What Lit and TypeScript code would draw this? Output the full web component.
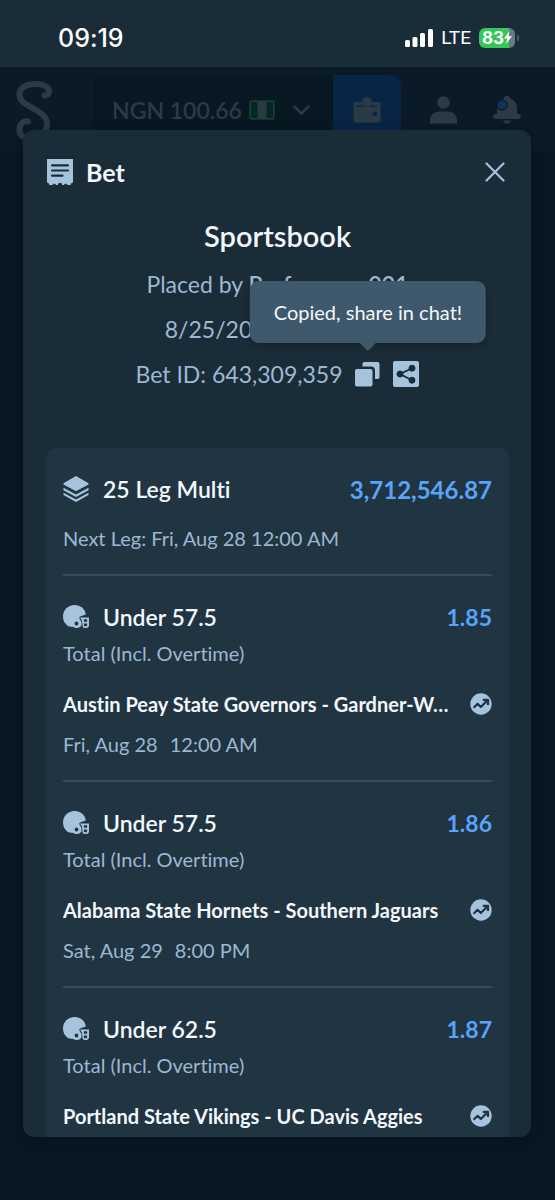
import { LitElement, html, css, svg } from "lit";
import { customElement, property, state } from "lit/decorators.js";

interface Leg {
  pick: string;
  odds: string;
  market: string;
  fixture: string;
  date: string;
  time: string;
}

const LEGS: Leg[] = [
  { pick: "Under 57.5", odds: "1.85", market: "Total (Incl. Overtime)", fixture: "Austin Peay State Governors - Gardner-Webb Runnin' Bulldogs", date: "Fri, Aug 28", time: "12:00 AM" },
  { pick: "Under 57.5", odds: "1.86", market: "Total (Incl. Overtime)", fixture: "Alabama State Hornets - Southern Jaguars", date: "Sat, Aug 29", time: "8:00 PM" },
  { pick: "Under 62.5", odds: "1.87", market: "Total (Incl. Overtime)", fixture: "Portland State Vikings - UC Davis Aggies", date: "Sat, Aug 29", time: "8:00 PM" },
];

const icon = (w: number, h: number, body: unknown) =>
  html`<svg width=${w} height=${h} viewBox="0 0 ${w} ${h}" fill="currentColor" aria-hidden="true">${body}</svg>`;

const slipIcon = () => icon(26, 26, svg`
  <path fill-rule="evenodd" d="M0 0h26v23.500c-1.400.2-2.200 1-2.400 2.500h-3.200c-.3-.9-.9-1.300-1.700-1.300s-1.300.4-1.700 1.300h-1.800c-.2-1.500-1-2.300-2.200-2.300s-2 .8-2.200 2.300H9c-.4-.9-1-1.300-1.700-1.300-.8 0-1.400.4-1.700 1.300H2.400C2.200 24.500 1.400 23.700 0 23.500zM5 5.200a1.100 1.100 0 0 0 0 2.200h16a1.100 1.100 0 0 0 0-2.200zm0 5.200a1.100 1.100 0 0 0 0 2.200h16a1.100 1.100 0 0 0 0-2.200zm0 5.200a1.100 1.100 0 0 0 0 2.200h10.500a1.100 1.100 0 0 0 0-2.200z"/>`);
const closeIcon = () => icon(20, 20, svg`<path d="M1.500 1.500l17 17M18.500 1.500l-17 17" fill="none" stroke="currentColor" stroke-width="2.200" stroke-linecap="round"/>`);
const copyIcon = () => icon(25, 25, svg`
  <path d="M9.500 0h13A2 2 0 0 1 24.500 2v13a2 2 0 0 1-2 2H20V8.500A4 4 0 0 0 16 4.500H7.500V2a2 2 0 0 1 2-2z"/>
  <rect x="0" y="7" width="17.500" height="17.500" rx="2"/>`);
const shareIcon = () => icon(26, 26, svg`
  <rect width="26" height="26" rx="2"/>
  <g fill="#1a2c38" stroke="#1a2c38"><path d="M19 7.200L7 13l12 6.200" fill="none" stroke-width="1.800"/>
  <circle cx="19" cy="7.200" r="3" /><circle cx="7" cy="13" r="3"/><circle cx="19" cy="19.200" r="3"/></g>`);
const layersIcon = () => icon(26, 26, svg`
  <path d="M13 0l12.500 7.200v1.400L13 15.300.500 8.600V7.200z"/>
  <path d="M.500 11.700L13 18.500l12.500-6.800v2.500L13 21 .500 14.200z"/>
  <path d="M.500 16.800L13 23.500l12.500-6.700v2.300L13 26 .500 19.100z"/>`);
const helmetIcon = () => icon(26, 24, svg`
  <path fill-rule="evenodd" d="M11.500 0C18 0 22.300 4.300 22.800 9.600l-5.200 1.600c-1.200.4-1.600 1.400-1 2.500l1.900 3.300v3.500c-1.200 1.700-2.800 2.500-4.700 2.500-1.800 0-3-.9-4.700-1.300-1.500-.3-3.300.2-4.600-1C1.500 18.500 0 15.600 0 11.600 0 5 5 0 11.500 0zM13.500 16.600a1.900 1.900 0 1 0 0 3.800 1.900 1.900 0 0 0 0-3.800z"/>
  <path fill-rule="evenodd" d="M17 12.400h9v8.800l-1.800 1.800h-3.400l-1.200-1.500L19 15.500zM20.900 14.200v2.600h3.200v-2.600zm0 4.300v2.300l.6.500h1.900l.7-.7v-2.100z"/>`);
const trendIcon = () => icon(22, 22, svg`
  <circle cx="11" cy="11" r="10.700"/>
  <path d="M3.600 14.800l4-4 3.200 3.200 6.600-6.600M12.800 6.800h5.200v5.200" fill="none" stroke="#213441" stroke-width="2.200" stroke-linejoin="round"/>`);

@customElement("status-bar")
export class StatusBar extends LitElement {
  static styles = css`
    :host { display: flex; align-items: center; justify-content: space-between; height: 67px; padding: 8px 40px 0 58px; box-sizing: border-box; background: #1a2c38; color: #fff; font-family: Inter, sans-serif; }
    .time { font-size: 25px; font-weight: 500; }
    .right { display: flex; align-items: center; gap: 8px; }
    .net { font-size: 19px; font-family: Roboto, sans-serif; }
    .battery { position: relative; display: flex; align-items: center; height: 20px; padding: 0 3px; border-radius: 6px; background: linear-gradient(90deg, #34c759 83%, #6a7a80 83%); font-size: 17px; font-weight: 700; }
    .battery::after { content: ""; position: absolute; right: -4px; top: 7px; width: 2px; height: 6px; border-radius: 1px; background: #4c5c66; }
    svg { display: block; }
  `;
  render() {
    return html`
      <span class="time">09:19</span>
      <div class="right">
        ${icon(28, 18, svg`<rect y="11" width="5" height="7" rx="1.500"/><rect x="7.500" y="8" width="5" height="10" rx="1.500"/><rect x="15" y="4" width="5" height="14" rx="1.500"/><rect x="23" width="5" height="18" rx="1.500"/>`)}
        <span class="net">LTE</span>
        <span class="battery">83${icon(8, 13, svg`<path d="M5.500 0L0 7.500h3.200L2 13l6-7.800H4.600z"/>`)}</span>
      </div>`;
  }
}

@customElement("site-header")
export class SiteHeader extends LitElement {
  static styles = css`
    :host { display: grid; grid-template-columns: 78px minmax(0, 1fr) 154px; height: 85px; padding: 8px 0 0 16px; box-sizing: border-box; background: #0a1a26; color: #2c3a45; font-family: Lato, sans-serif; }
    svg { display: block; }
    button { border: 0; padding: 0; background: none; color: inherit; font: inherit; }
    .logo { color: #2c3a45; padding-top: 6px; }
    .balance { display: flex; height: 70px; border-radius: 10px; overflow: hidden; background: #081822; }
    .amount { flex: 1; display: flex; align-items: center; gap: 7px; padding: 0 23px 0 18px; font-size: 23px; font-weight: 600; white-space: nowrap; }
    .chevron { margin-left: auto; }
    .wallet { display: grid; place-items: center; width: 68px; background: #072544; }
    .actions { display: flex; align-items: center; gap: 36px; height: 70px; padding-left: 29px; }
  `;
  render() {
    return html`
      <a class="logo" href="#" aria-label="Home">${icon(38, 60, svg`<path d="M28.500 14.500c4-.5 5.500-3.500 4-6.500C30 3.500 25 3 19.500 3 9 3 3.500 7.500 3.500 13.500c0 8 9 11 15.500 15 7 4 12 7.500 12 14.500S26 56 18 57M12 40.500C6 39.500 3 44.500 3.500 50c.3 3 1.500 4.500 3.500 5.500" fill="none" stroke="currentColor" stroke-width="6" stroke-linecap="round"/>`)}</a>
      <div class="balance">
        <button class="amount">NGN 100.66
          ${icon(26, 20, svg`<rect x="1" y="1" width="24" height="18" rx="2" fill="#2c3a45" stroke="#183d35" stroke-width="1.500"/><path d="M2 2h6.500v16H2zM17.500 2H24v16h-6.500z" fill="#03291f"/>`)}
          <span class="chevron">${icon(17, 10, svg`<path d="M1.500 1.500l7 7 7-7" fill="none" stroke="currentColor" stroke-width="2.500" stroke-linecap="round"/>`)}</span>
        </button>
        <button class="wallet" aria-label="Wallet">${icon(28, 26, svg`<path fill-rule="evenodd" d="M2 5h7v3.500H3.500v1.200H24.500V8.500H19V5h7a1.500 1.500 0 0 1 1.500 1.500V23a2.500 2.500 0 0 1-2.500 2.500H3A2.500 2.500 0 0 1 .500 23V6.500A1.500 1.500 0 0 1 2 5zM22 14.500a2.300 2.300 0 1 0 0 4.600 2.300 2.300 0 0 0 0-4.600z"/><circle cx="14" cy="5" r="5"/>`)}</button>
      </div>
      <div class="actions">
        <button aria-label="Profile">${icon(27, 28, svg`<circle cx="13.500" cy="6.500" r="6.300"/><path d="M0 27.500v-3c0-5 4-9 9-9h9c5 0 9 4 9 9v3z"/>`)}</button>
        <button aria-label="Notifications">${icon(28, 28, svg`<path d="M11 2.500a3 3 0 0 1 6 0c4.500 1.300 7 5 7 9.500V18h1.500a2.400 2.400 0 0 1 0 5h-23a2.400 2.400 0 0 1 0-5H4v-6C4 7.500 6.500 3.800 11 2.500zM10 24.500h8c-.5 2-2 3.200-4 3.200s-3.500-1.200-4-3.200z"/><circle cx="9" cy="9" r="5.800" fill="#0a1a26"/><circle cx="9" cy="9" r="4.500" fill="#12335c"/>`)}</button>
      </div>`;
  }
}

@customElement("bet-leg")
export class BetLeg extends LitElement {
  @property({ attribute: false }) leg!: Leg;
  static styles = css`
    :host { display: block; border-top: 2px solid #374b59; padding: 23px 0 18px; line-height: 36px; }
    svg { display: block; }
    .row { display: flex; align-items: center; height: 36px; }
    .pick { margin-left: 14px; flex: 1; color: #f2f8fd; font-size: 23px; font-weight: 600; }
    .glyph { color: #a6c3de; }
    .odds { color: #57a4fa; font-size: 23px; font-weight: 700; }
    .market { font-size: 20px; height: 36px; margin-bottom: 15px; }
    .fixture { flex: 1; min-width: 0; overflow: hidden; text-overflow: ellipsis; white-space: nowrap; color: #f2f8fd; text-decoration: none; font-size: 20px; font-weight: 700; margin-right: 20px; }
    .when { display: flex; gap: 12px; font-size: 20px; height: 36px; margin-top: 4px; }
    button { border: 0; padding: 0; background: none; color: #a6c3de; }
  `;
  render() {
    const l = this.leg;
    return html`
      <div class="row"><span class="glyph">${helmetIcon()}</span><span class="pick">${l.pick}</span><span class="odds">${l.odds}</span></div>
      <div class="market">${l.market}</div>
      <div class="row"><a class="fixture" href="#">${l.fixture}</a><button aria-label="Live stats">${trendIcon()}</button></div>
      <div class="when"><span>${l.date}</span><span>${l.time}</span></div>`;
  }
}

@customElement("app-root")
export class AppRoot extends LitElement {
  @state() private copied = true;
  static styles = css`
    :host { display: block; position: relative; height: 100vh; overflow: hidden; background: #071824; font-family: Lato, sans-serif; font-variant-ligatures: none; color: #9db8d2; }
    svg { display: block; }
    button { border: 0; padding: 0; background: none; color: #a6c3de; font: inherit; cursor: pointer; }
    .overlay { position: absolute; inset: 0; display: flex; padding: 130px 24px 63px 23px; }
    .modal { flex: 1; min-width: 0; display: flex; flex-direction: column; overflow: hidden; border-radius: 11px; background: #1a2c38; box-shadow: 0 4px 14px rgba(0, 8, 16, 0.3); }
    .head { display: flex; align-items: center; gap: 13px; height: 84px; flex: none; padding: 0 26px 0 24px; color: #a6c3de; }
    .head h1 { flex: 1; margin: 0; color: #f2f8fd; font-size: 25px; font-weight: 700; }
    .body { flex: 1; min-height: 0; overflow-y: auto; scrollbar-width: none; padding: 4px 22px 0 23px; }
    .summary { display: flex; flex-direction: column; align-items: center; gap: 9px; line-height: 36px; font-size: 23px; }
    .summary h2 { margin: 0 0 3px; color: #f2f8fd; font-size: 29px; font-weight: 600; }
    .summary p { margin: 0; }
    .summary strong { font-weight: 600; }
    .id { display: flex; align-items: center; gap: 13px; }
    .copy { position: relative; }
    .tip { position: absolute; left: 50%; bottom: 44px; transform: translateX(-50%); padding: 13px 24px; border-radius: 9px; background: #3f586b; color: #f2f8fd; font-size: 20px; line-height: 36px; white-space: nowrap; box-shadow: 0 3px 6px rgba(0, 0, 0, 0.2); }
    .tip::after { content: ""; position: absolute; left: 50%; top: 100%; margin-left: -8px; border: 8px solid transparent; border-top-color: #3f586b; border-bottom: 0; }
    .card { margin-top: 56px; padding: 23px 17px 0; border-radius: 10px; background: #213441; }
    .multi { display: flex; align-items: center; gap: 14px; height: 36px; font-size: 23px; font-weight: 600; color: #a6c3de; }
    .name { flex: 1; color: #f2f8fd; }
    .total { color: #57a4fa; font-size: 24px; font-weight: 700; }
    .next { margin: 13px 0 18px; font-size: 20px; line-height: 36px; }
  `;
  render() {
    return html`
      <status-bar></status-bar>
      <site-header></site-header>
      <div class="overlay">
        <section class="modal" role="dialog" aria-label="Bet">
          <div class="head">${slipIcon()}<h1>Bet</h1><button aria-label="Close">${closeIcon()}</button></div>
          <div class="body">
            <div class="summary">
              <h2>Sportsbook</h2>
              <p>Placed by <strong>Professorxx001</strong></p>
              <p>8/25/2020, 10:18 PM</p>
              <div class="id">
                <span>Bet ID: 643,309,359</span>
                <button class="copy" aria-label="Copy bet ID" @click=${() => (this.copied = !this.copied)}>
                  ${copyIcon()}${this.copied ? html`<span class="tip" role="tooltip">Copied, share in chat!</span>` : ""}
                </button>
                <button aria-label="Share">${shareIcon()}</button>
              </div>
            </div>
            <div class="card">
              <div class="multi">${layersIcon()}<span class="name">25 Leg Multi</span><span class="total">3,712,546.87</span></div>
              <div class="next">Next Leg: Fri, Aug 28 12:00 AM</div>
              ${LEGS.map((leg) => html`<bet-leg .leg=${leg}></bet-leg>`)}
            </div>
          </div>
        </section>
      </div>`;
  }
}
